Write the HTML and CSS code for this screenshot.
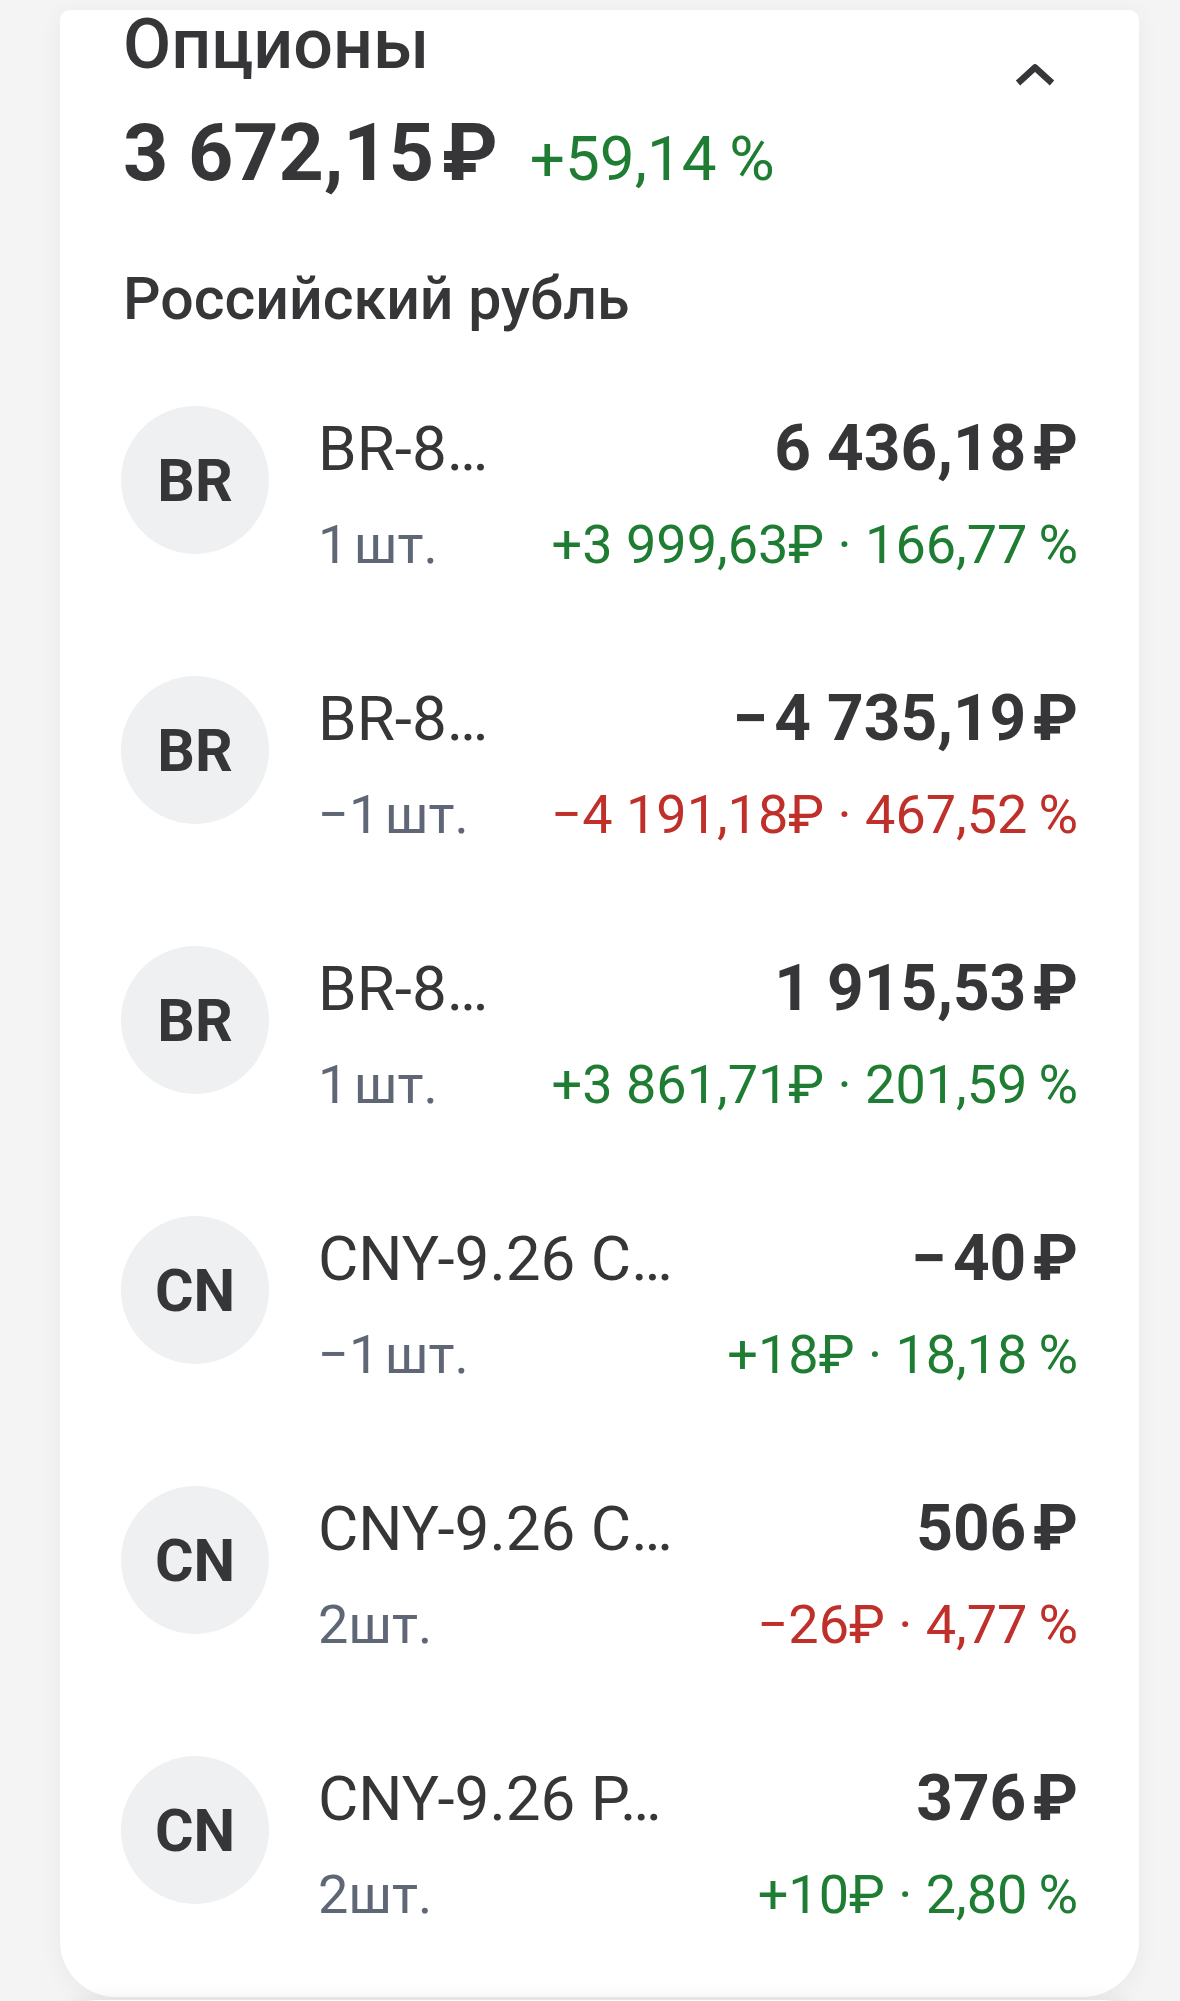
FILE: index.html
```html
<!DOCTYPE html>
<html lang="ru">
<head>
  <meta charset="utf-8">
  <title>Опционы</title>
  <meta name="viewport" content="width=device-width, initial-scale=1">
  <link rel="stylesheet" href="styles.css">
</head>
<body>
  <div class="card">
    <div class="header">
      <div class="header-text">
        <h2 class="title">Опционы</h2>
        <div class="total">
          <span class="total-value">3&nbsp;672,15&#8202;₽</span>
          <span class="total-change up">+59,14&thinsp;%</span>
        </div>
      </div>
      <button class="collapse" aria-label="Свернуть">
        <svg width="40" height="24" viewBox="0 0 40 24">
          <polyline points="3,20 20,4.5 37,20" fill="none" stroke="#363638" stroke-width="6.5" stroke-linejoin="round"/>
        </svg>
      </button>
    </div>

    <h3 class="currency">Российский рубль</h3>

    <ul class="positions">
      <li class="position">
        <div class="avatar">BR</div>
        <div class="info">
          <div class="line top">
            <span class="name">BR-8…</span>
            <span class="amount">6&nbsp;436,18&#8202;₽</span>
          </div>
          <div class="line bottom">
            <span class="qty">1&#8202;шт.</span>
            <span class="change up">+3&nbsp;999,63₽ · 166,77&thinsp;%</span>
          </div>
        </div>
      </li>
      <li class="position">
        <div class="avatar">BR</div>
        <div class="info">
          <div class="line top">
            <span class="name">BR-8…</span>
            <span class="amount">−&#8202;4&nbsp;735,19&#8202;₽</span>
          </div>
          <div class="line bottom">
            <span class="qty">−1&#8202;шт.</span>
            <span class="change down">−4&nbsp;191,18₽ · 467,52&thinsp;%</span>
          </div>
        </div>
      </li>
      <li class="position">
        <div class="avatar">BR</div>
        <div class="info">
          <div class="line top">
            <span class="name">BR-8…</span>
            <span class="amount">1&nbsp;915,53&#8202;₽</span>
          </div>
          <div class="line bottom">
            <span class="qty">1&#8202;шт.</span>
            <span class="change up">+3&nbsp;861,71₽ · 201,59&thinsp;%</span>
          </div>
        </div>
      </li>
      <li class="position">
        <div class="avatar">CN</div>
        <div class="info">
          <div class="line top">
            <span class="name">CNY-9.26 C…</span>
            <span class="amount">−&#8202;40&#8202;₽</span>
          </div>
          <div class="line bottom">
            <span class="qty">−1&#8202;шт.</span>
            <span class="change up">+18₽ · 18,18&thinsp;%</span>
          </div>
        </div>
      </li>
      <li class="position">
        <div class="avatar">CN</div>
        <div class="info">
          <div class="line top">
            <span class="name">CNY-9.26 C…</span>
            <span class="amount">506&#8202;₽</span>
          </div>
          <div class="line bottom">
            <span class="qty">2шт.</span>
            <span class="change down">−26₽ · 4,77&thinsp;%</span>
          </div>
        </div>
      </li>
      <li class="position">
        <div class="avatar">CN</div>
        <div class="info">
          <div class="line top">
            <span class="name">CNY-9.26 P…</span>
            <span class="amount">376&#8202;₽</span>
          </div>
          <div class="line bottom">
            <span class="qty">2шт.</span>
            <span class="change up">+10₽ · 2,80&thinsp;%</span>
          </div>
        </div>
      </li>
    </ul>
  </div>

  <div class="next-card"></div>
</body>
</html>
```

FILE: styles.css
```css
body {
  font-family: Roboto, "Noto Sans", "DejaVu Sans", sans-serif;
  background: #f4f4f4;
  color: #363638;
  margin: 0;
  padding-top: 10px;
  overflow: hidden;
}

.card {
  background: white;
  margin: 0 41px 0 60px;
  padding: 0 61px 72px 63px;
  border-radius: 10px 10px 56px 56px;
  box-shadow: 0 4px 24px rgba(0, 0, 0, 0.05);
}

.header {
  display: flex;
  justify-content: space-between;
  align-items: flex-start;
}

.title {
  margin: 0;
  font-size: 70px;
  font-weight: 500;
  line-height: 68px;
}

.total {
  display: flex;
  align-items: baseline;
  gap: 32px;
  margin-top: 30px;
  line-height: 90px;
}

.total-value {
  font-size: 79px;
  font-weight: 700;
}

.total-change {
  font-size: 62px;
  font-weight: 400;
}

.collapse {
  border: none;
  background: none;
  padding: 0;
  margin: 53px 23px 0 0;
  width: 40px;
  height: 24px;
  cursor: pointer;
}

.collapse svg {
  display: block;
}

.currency {
  margin: 60px 0 0;
  font-size: 59px;
  font-weight: 500;
  line-height: 70px;
}

.positions {
  list-style: none;
  margin: 72px 0 0;
  padding: 0;
  display: flex;
  flex-direction: column;
  gap: 101px;
}

.position {
  display: flex;
  align-items: flex-start;
  gap: 49px;
}

.avatar {
  flex: none;
  width: 148px;
  height: 148px;
  margin-left: -2px;
  border-radius: 50%;
  background: #eff0f2;
  display: flex;
  align-items: center;
  justify-content: center;
  font-size: 59px;
  font-weight: 700;
}

.info {
  flex: 1;
  min-width: 0;
  padding-top: 5px;
}

.line {
  display: flex;
  justify-content: space-between;
  align-items: baseline;
  white-space: nowrap;
}

.line.top {
  line-height: 76px;
}

.line.bottom {
  margin-top: 28px;
  line-height: 60px;
  font-size: 54px;
}

.name {
  font-size: 62px;
  font-weight: 400;
  overflow: hidden;
  text-overflow: ellipsis;
}

.amount {
  font-size: 64px;
  font-weight: 700;
}

.qty {
  color: #5f6675;
}

.up {
  color: #1e7d32;
}

.down {
  color: #c0302a;
}

.next-card {
  background: white;
  margin: 3px 29px 0 49px;
  height: 200px;
  border-radius: 48px 48px 0 0;
  box-shadow: 0 -4px 16px rgba(0, 0, 0, 0.05);
}
```
